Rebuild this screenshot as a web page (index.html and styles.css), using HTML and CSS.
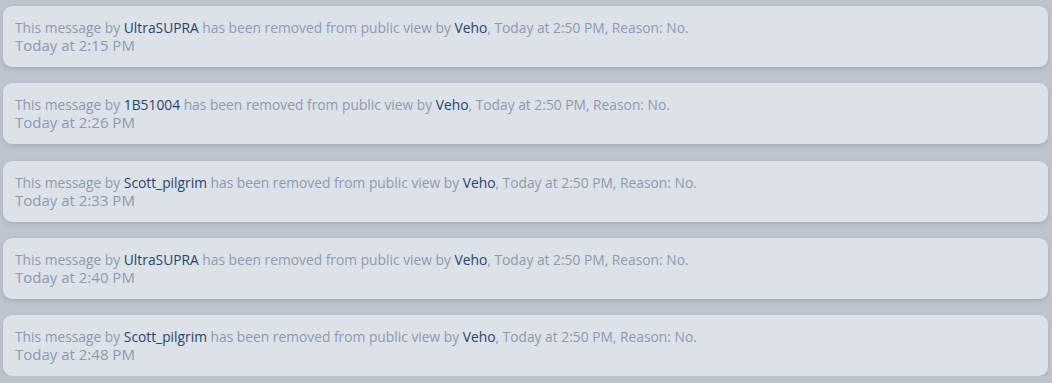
FILE: index.html
```html
<!DOCTYPE html>
<html>
<head>
<meta charset="utf-8">
<link rel="stylesheet" href="styles.css">
</head>
<body>
<div class="list">
  <div class="card">
    <div class="notice">This message by <a class="user">UltraSUPRA</a> has been removed from public view by <a class="user">Veho</a>, Today at 2:50 PM, Reason: No.</div>
    <div class="date">Today at 2:15 PM</div>
  </div>
  <div class="card">
    <div class="notice">This message by <a class="user">1B51004</a> has been removed from public view by <a class="user">Veho</a>, Today at 2:50 PM, Reason: No.</div>
    <div class="date">Today at 2:26 PM</div>
  </div>
  <div class="card">
    <div class="notice">This message by <a class="user">Scott_pilgrim</a> has been removed from public view by <a class="user">Veho</a>, Today at 2:50 PM, Reason: No.</div>
    <div class="date">Today at 2:33 PM</div>
  </div>
  <div class="card">
    <div class="notice">This message by <a class="user">UltraSUPRA</a> has been removed from public view by <a class="user">Veho</a>, Today at 2:50 PM, Reason: No.</div>
    <div class="date">Today at 2:40 PM</div>
  </div>
  <div class="card">
    <div class="notice">This message by <a class="user">Scott_pilgrim</a> has been removed from public view by <a class="user">Veho</a>, Today at 2:50 PM, Reason: No.</div>
    <div class="date">Today at 2:48 PM</div>
  </div>
</div>
</body>
</html>
```
FILE: styles.css
```css
html, body {
  margin: 0;
  padding: 0;
  background: #bec5cf;
}
body {
  font-family: "Open Sans", "Liberation Sans", sans-serif;
}
.list {
  display: flex;
  flex-direction: column;
  gap: 16.25px;
  padding: 6px 4px 0 3px;
}
.card {
  background: #dde1e8;
  border-radius: 9px;
  box-shadow: 0 2px 4px rgba(120, 130, 145, 0.35);
  padding: 13px 12px 12px 12px;
  height: 36px;
}
.notice {
  font-size: 13.8px;
  line-height: 18px;
  color: #8d9ab0;
}
.date {
  font-size: 15px;
  line-height: 17px;
  color: #8d9ab0;
}
.user {
  color: #254670;
  text-decoration: none;
}
```
